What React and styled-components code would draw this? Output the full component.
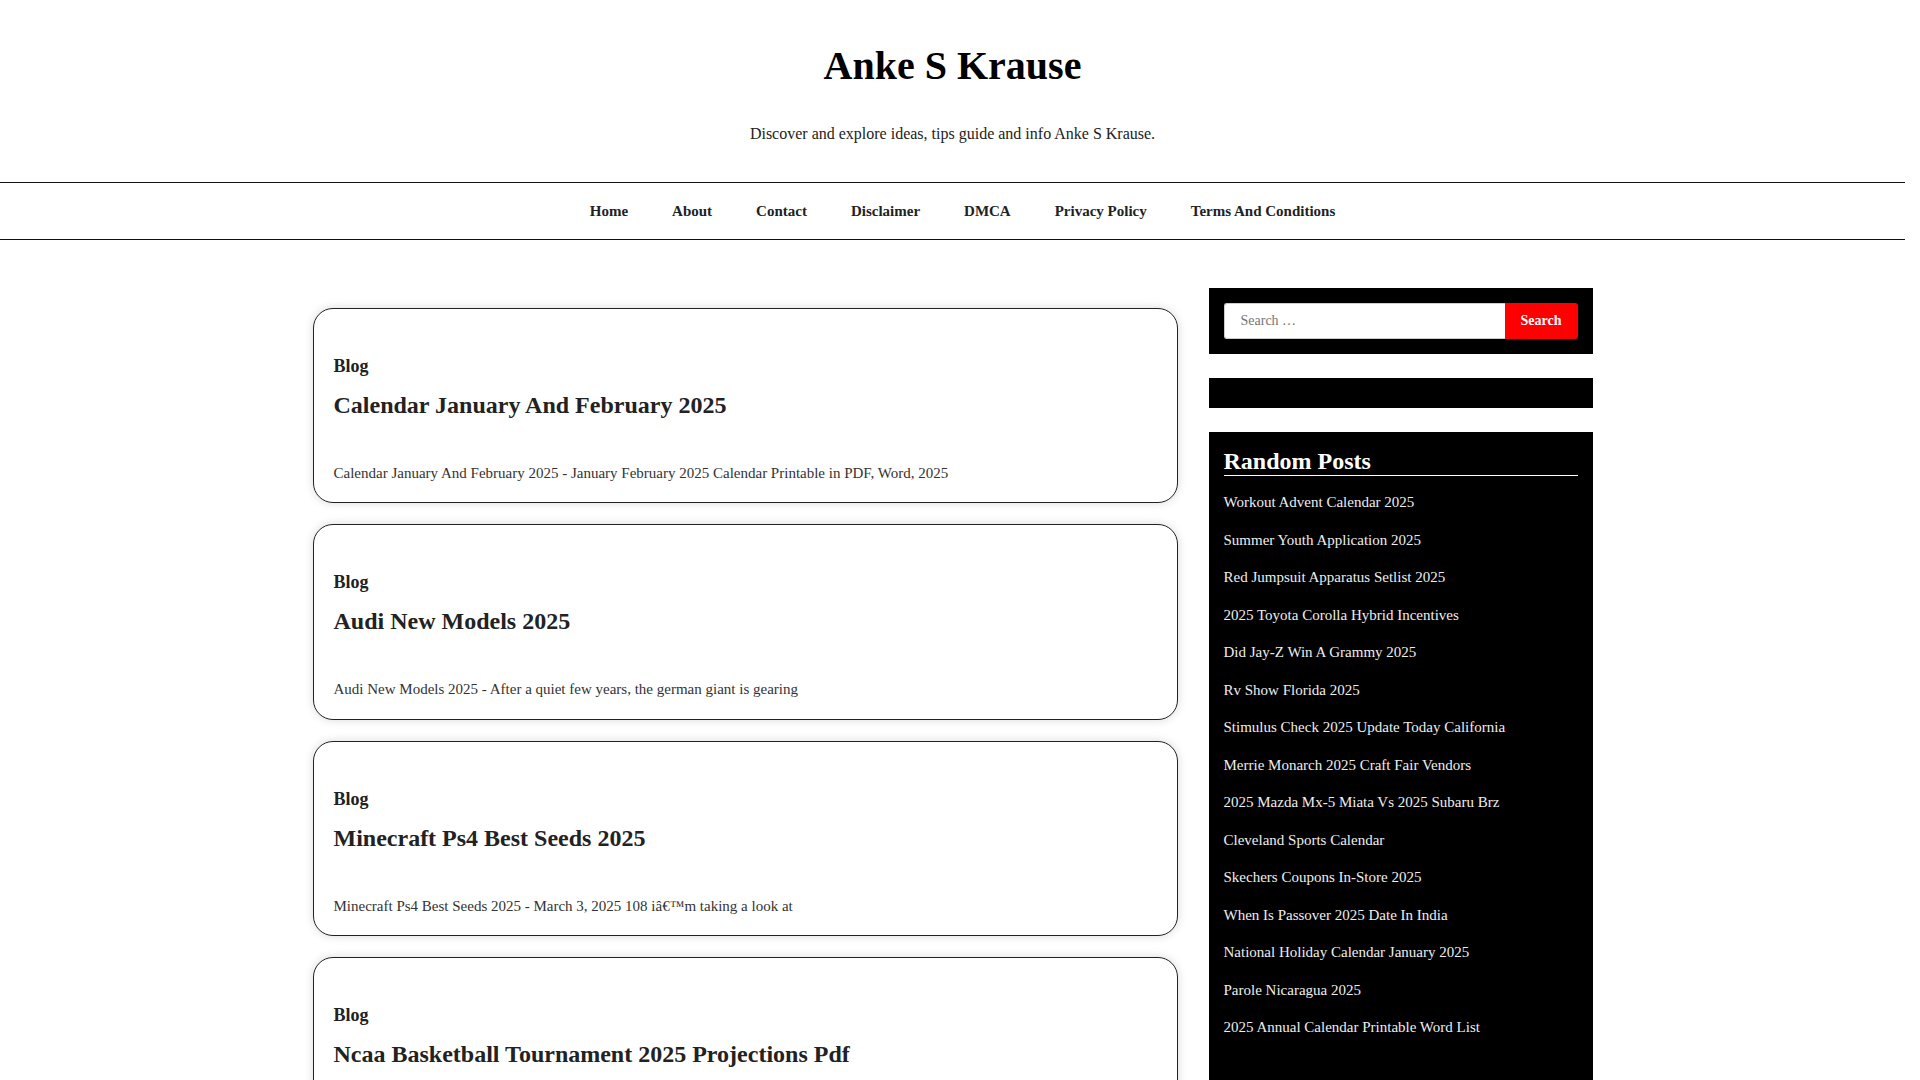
import React from "react";
import styled, { createGlobalStyle } from "styled-components";

const GlobalStyle = createGlobalStyle`
  html, body {
    margin: 0;
    padding: 0;
    background: #fff;
  }
  body {
    font-family: "Liberation Serif", "Times New Roman", serif;
    color: #222;
    /* the original page was shot with a 15px scrollbar gutter */
    padding-right: 15px;
  }
  * {
    box-sizing: border-box;
  }
`;

const Header = styled.header`
  text-align: center;
  padding: 42px 20px 36px;
`;

const SiteTitle = styled.h1`
  margin: 0;
  font-size: 40px;
  line-height: 48px;
  font-weight: 700;
  color: #000;
`;

const Tagline = styled.p`
  margin: 32px 0 0;
  font-size: 16px;
  line-height: 24px;
  color: #222;
`;

const Nav = styled.nav`
  border-top: 1px solid #111;
  border-bottom: 1px solid #111;
`;

const NavList = styled.ul`
  list-style: none;
  margin: 0;
  padding: 17px 0 16px 20px;
  display: flex;
  justify-content: center;
`;

const NavItem = styled.li`
  padding: 0 22px;
  font-size: 15px;
  line-height: 22.5px;
  font-weight: 700;
  color: #222;
`;

const Container = styled.div`
  width: 1280px;
  margin: 0 auto;
  padding: 48px 0 40px;
  display: flex;
  gap: 31px;
  align-items: flex-start;
`;

const Main = styled.main`
  flex: 0 0 865px;
  padding-top: 20px;
`;

const Card = styled.article`
  border: 1px solid #222;
  border-radius: 20px;
  box-shadow: 0 0 10px rgba(0, 0, 0, 0.15);
  padding: 44px 20px 18px;
  margin-bottom: 21px;
  background: #fff;
`;

const Category = styled.div`
  font-size: 18px;
  line-height: 27px;
  font-weight: 700;
  color: #222;
`;

const PostTitle = styled.h2`
  margin: 10px 0 0;
  font-size: 24px;
  line-height: 31px;
  font-weight: 700;
  color: #222;
`;

const Excerpt = styled.p`
  margin: 41px 0 0;
  font-size: 15px;
  line-height: 22.5px;
  color: #333;
`;

const Sidebar = styled.aside`
  flex: 0 0 384px;
`;

const Widget = styled.section`
  background: #000;
  padding: 15px;
  margin-bottom: 24px;
  min-height: 30px;
`;

const SearchForm = styled.form`
  display: flex;
`;

const SearchInput = styled.input`
  flex: 1;
  height: 36px;
  border: 1px solid #ccc;
  border-right: none;
  border-radius: 3px 0 0 3px;
  padding: 0 16px;
  font-family: "Liberation Serif", "Times New Roman", serif;
  font-size: 14px;
  color: #333;
  background: #fff;
  outline: none;
  &::placeholder {
    color: #757575;
  }
`;

const SearchButton = styled.button`
  height: 36px;
  padding: 0 16px;
  border: none;
  border-radius: 0 3px 3px 0;
  background: #ff0000;
  color: #fff;
  font-family: "Liberation Serif", "Times New Roman", serif;
  font-size: 14px;
  font-weight: 700;
  cursor: pointer;
`;

const WidgetTitle = styled.h2`
  margin: 0 0 15px;
  padding-top: 1px;
  font-size: 24px;
  line-height: 27.6px;
  font-weight: 700;
  color: #fff;
  border-bottom: 1px solid #fff;
`;

const PostList = styled.ul`
  list-style: none;
  margin: 0;
  padding: 0 0 20px;
`;

const PostLink = styled.li`
  font-size: 15px;
  line-height: 22.5px;
  color: #eee;
  margin-bottom: 15px;
`;

const navItems = [
  "Home",
  "About",
  "Contact",
  "Disclaimer",
  "DMCA",
  "Privacy Policy",
  "Terms And Conditions",
];

const posts = [
  {
    title: "Calendar January And February 2025",
    excerpt:
      "Calendar January And February 2025 - January February 2025 Calendar Printable in PDF, Word, 2025",
  },
  {
    title: "Audi New Models 2025",
    excerpt:
      "Audi New Models 2025 - After a quiet few years, the german giant is gearing",
  },
  {
    title: "Minecraft Ps4 Best Seeds 2025",
    excerpt:
      "Minecraft Ps4 Best Seeds 2025 - March 3, 2025 108 i\u00e2\u20ac\u2122m taking a look at",
  },
  {
    title: "Ncaa Basketball Tournament 2025 Projections Pdf",
    excerpt:
      "Ncaa Basketball Tournament 2025 Projections Pdf - The ncaa tournament bracket is set",
  },
];

const randomPosts = [
  "Workout Advent Calendar 2025",
  "Summer Youth Application 2025",
  "Red Jumpsuit Apparatus Setlist 2025",
  "2025 Toyota Corolla Hybrid Incentives",
  "Did Jay-Z Win A Grammy 2025",
  "Rv Show Florida 2025",
  "Stimulus Check 2025 Update Today California",
  "Merrie Monarch 2025 Craft Fair Vendors",
  "2025 Mazda Mx-5 Miata Vs 2025 Subaru Brz",
  "Cleveland Sports Calendar",
  "Skechers Coupons In-Store 2025",
  "When Is Passover 2025 Date In India",
  "National Holiday Calendar January 2025",
  "Parole Nicaragua 2025",
  "2025 Annual Calendar Printable Word List",
];

export default function App() {
  return (
    <>
      <GlobalStyle />
      <Header>
        <SiteTitle>Anke S Krause</SiteTitle>
        <Tagline>
          Discover and explore ideas, tips guide and info Anke S Krause.
        </Tagline>
      </Header>
      <Nav>
        <NavList>
          {navItems.map((item) => (
            <NavItem key={item}>{item}</NavItem>
          ))}
        </NavList>
      </Nav>
      <Container>
        <Main>
          {posts.map((post) => (
            <Card key={post.title}>
              <Category>Blog</Category>
              <PostTitle>{post.title}</PostTitle>
              <Excerpt>{post.excerpt}</Excerpt>
            </Card>
          ))}
        </Main>
        <Sidebar>
          <Widget>
            <SearchForm onSubmit={(e) => e.preventDefault()}>
              <SearchInput type="search" placeholder="Search …" />
              <SearchButton type="submit">Search</SearchButton>
            </SearchForm>
          </Widget>
          <Widget />
          <Widget>
            <WidgetTitle>Random Posts</WidgetTitle>
            <PostList>
              {randomPosts.map((p) => (
                <PostLink key={p}>{p}</PostLink>
              ))}
            </PostList>
          </Widget>
        </Sidebar>
      </Container>
    </>
  );
}
